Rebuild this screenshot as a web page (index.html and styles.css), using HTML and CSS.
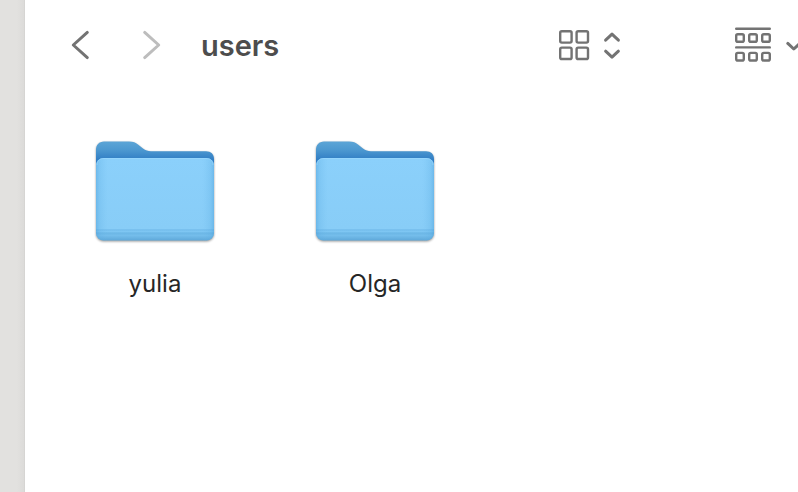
FILE: index.html
```
<!DOCTYPE html>
<html lang="en">
<head>
<meta charset="utf-8">
<meta name="viewport" content="width=device-width, initial-scale=1">
<title>users</title>
<link rel="stylesheet" href="styles.css">
</head>
<body>
<div class="window">
  <aside class="sidebar"></aside>
  <main class="content">
    <header class="toolbar">
      <nav class="history">
        <button class="tool nav-button" type="button" aria-label="Back">
          <svg width="20" height="32" viewBox="0 0 20 32"><path d="M17.300 3.400 3.300 16l14 12.600"/></svg>
        </button>
        <button class="tool nav-button" type="button" aria-label="Forward" disabled>
          <svg width="20" height="32" viewBox="0 0 20 32"><path d="M2.700 3.400 16.700 16l-14 12.600"/></svg>
        </button>
      </nav>
      <h1 class="title">users</h1>
      <div class="views">
        <button class="tool view-button" type="button" aria-label="View as icons">
          <svg width="32" height="32" viewBox="0 0 32 32">
            <rect x="2.200" y="2.200" width="11.400" height="11.400" rx="1.600"/>
            <rect x="18.600" y="2.200" width="11.400" height="11.400" rx="1.600"/>
            <rect x="2.200" y="18.600" width="11.400" height="11.400" rx="1.600"/>
            <rect x="18.600" y="18.600" width="11.400" height="11.400" rx="1.600"/>
          </svg>
          <svg class="bold" width="20" height="32" viewBox="0 0 20 32"><path d="M3.600 11.200 10 5.200l6.400 6M3.600 22.200 10 28.200l6.400-6"/></svg>
        </button>
        <button class="tool view-button" type="button" aria-label="Group items">
          <svg width="38" height="36" viewBox="0 0 38 36">
            <path d="M2.200 1.700h33.600M2.200 20.400h33.600"/>
            <rect x="2.200" y="7.200" width="7.600" height="7.600" rx="1.600"/>
            <rect x="15.200" y="7.200" width="7.600" height="7.600" rx="1.600"/>
            <rect x="28.200" y="7.200" width="7.600" height="7.600" rx="1.600"/>
            <rect x="2.200" y="25.900" width="7.600" height="7.600" rx="1.600"/>
            <rect x="15.200" y="25.900" width="7.600" height="7.600" rx="1.600"/>
            <rect x="28.200" y="25.900" width="7.600" height="7.600" rx="1.600"/>
          </svg>
          <svg class="bold" width="20" height="32" viewBox="0 0 20 32"><path d="M3.800 14.400l6 5.600 6-5.600"/></svg>
        </button>
      </div>
    </header>
    <svg class="defs" width="0" height="0" aria-hidden="true">
      <defs>
        <linearGradient id="back" x1="0" y1="0" x2="0" y2="20" gradientUnits="userSpaceOnUse">
          <stop offset="0.1" stop-color="#5ba4d6"/>
          <stop offset="0.5" stop-color="#4c98d0"/>
          <stop offset="1" stop-color="#307dc4"/>
        </linearGradient>
        <linearGradient id="front" x1="0" y1="0" x2="0" y2="1">
          <stop offset="0" stop-color="#8bd0fb"/>
          <stop offset="0.86" stop-color="#88cdf7"/>
          <stop offset="0.87" stop-color="#72bbeb"/>
          <stop offset="0.89" stop-color="#7fc7f3"/>
          <stop offset="0.91" stop-color="#6cb7e6"/>
          <stop offset="0.94" stop-color="#74bdeb"/>
          <stop offset="1" stop-color="#5ea8d9"/>
        </linearGradient>
        <linearGradient id="sides" x1="0" y1="0" x2="1" y2="0">
          <stop offset="0" stop-color="#3f96d4" stop-opacity="0.4"/>
          <stop offset="0.03" stop-color="#58a9df" stop-opacity="0.24"/>
          <stop offset="0.1" stop-color="#6bb9ea" stop-opacity="0"/>
          <stop offset="0.9" stop-color="#6bb9ea" stop-opacity="0"/>
          <stop offset="0.97" stop-color="#58a9df" stop-opacity="0.24"/>
          <stop offset="1" stop-color="#3f96d4" stop-opacity="0.4"/>
        </linearGradient>
        <symbol id="folder" viewBox="0 0 128 108">
          <path fill="url(#back)" d="M5 92V10c0-5 3-8.500 8-8.500h25c4.500 0 6.500 1.200 9 3l5 4c2.500 2 5 2.700 8 2.700h55c5 0 8 3 8 7.800V92z"/>
          <rect x="5" y="18" width="118" height="82.500" rx="7.500" fill="url(#front)"/>
          <rect x="5" y="18" width="118" height="82.500" rx="7.500" fill="url(#sides)"/>
          <path d="M6 25c0-4 2.500-6.500 6.500-6.500h103c4 0 6.500 2.500 6.500 6.500" fill="none" stroke="#9ddafd" stroke-width="1" stroke-opacity="0.6"/>
        </symbol>
      </defs>
    </svg>
    <section class="files" aria-label="Folders">
      <a class="file" href="#yulia">
        <svg class="folder" width="128" height="108"><use href="#folder"/></svg>
        <span class="name">yulia</span>
      </a>
      <a class="file" href="#Olga">
        <svg class="folder" width="128" height="108"><use href="#folder"/></svg>
        <span class="name">Olga</span>
      </a>
    </section>
  </main>
</div>
</body>
</html>
```
FILE: styles.css
```
* {
  box-sizing: border-box;
}

body {
  margin: 0;
  background: #fff;
  font-family: Inter, "Liberation Sans", sans-serif;
}

.window {
  display: grid;
  grid-template-columns: 25px minmax(0, 1fr);
  min-height: 100vh;
}

.sidebar {
  background: linear-gradient(to right, #e2e1df 70%, #dcdbd9);
  border-right: 1px solid #d6d5d3;
}

.content {
  overflow: hidden;
}

.toolbar {
  display: flex;
  align-items: center;
  height: 90px;
  padding-left: 45px;
}

.history {
  display: flex;
  gap: 52px;
}

.tool {
  display: flex;
  align-items: center;
  padding: 0;
  border: 0;
  background: none;
  color: #737373;
}

.tool:disabled {
  color: #bdbdbd;
}

.tool svg {
  display: block;
  flex: none;
  fill: none;
  stroke: currentColor;
  stroke-width: 2.4;
  stroke-linecap: round;
  stroke-linejoin: round;
}

.tool .bold,
.nav-button svg {
  stroke-width: 3;
}

.title {
  margin: 0 0 0 39px;
  padding-top: 2px;
  color: #4d4d4d;
  font-size: 29px;
  font-weight: 600;
  line-height: 36px;
}

.views {
  display: flex;
  gap: 112px;
  margin-left: auto;
  margin-right: -6px;
}

.view-button {
  gap: 12px;
}

.defs {
  display: block;
}

.files {
  display: flex;
  flex-wrap: wrap;
  padding: 50px 20px;
}

.file {
  display: flex;
  flex-direction: column;
  align-items: center;
  gap: 20px;
  width: 220px;
  color: #262626;
  text-decoration: none;
}

.folder {
  display: block;
  filter: drop-shadow(0 1px 1px rgba(0, 0, 0, 0.4));
}

.name {
  font-size: 24px;
  line-height: 32px;
}
```
